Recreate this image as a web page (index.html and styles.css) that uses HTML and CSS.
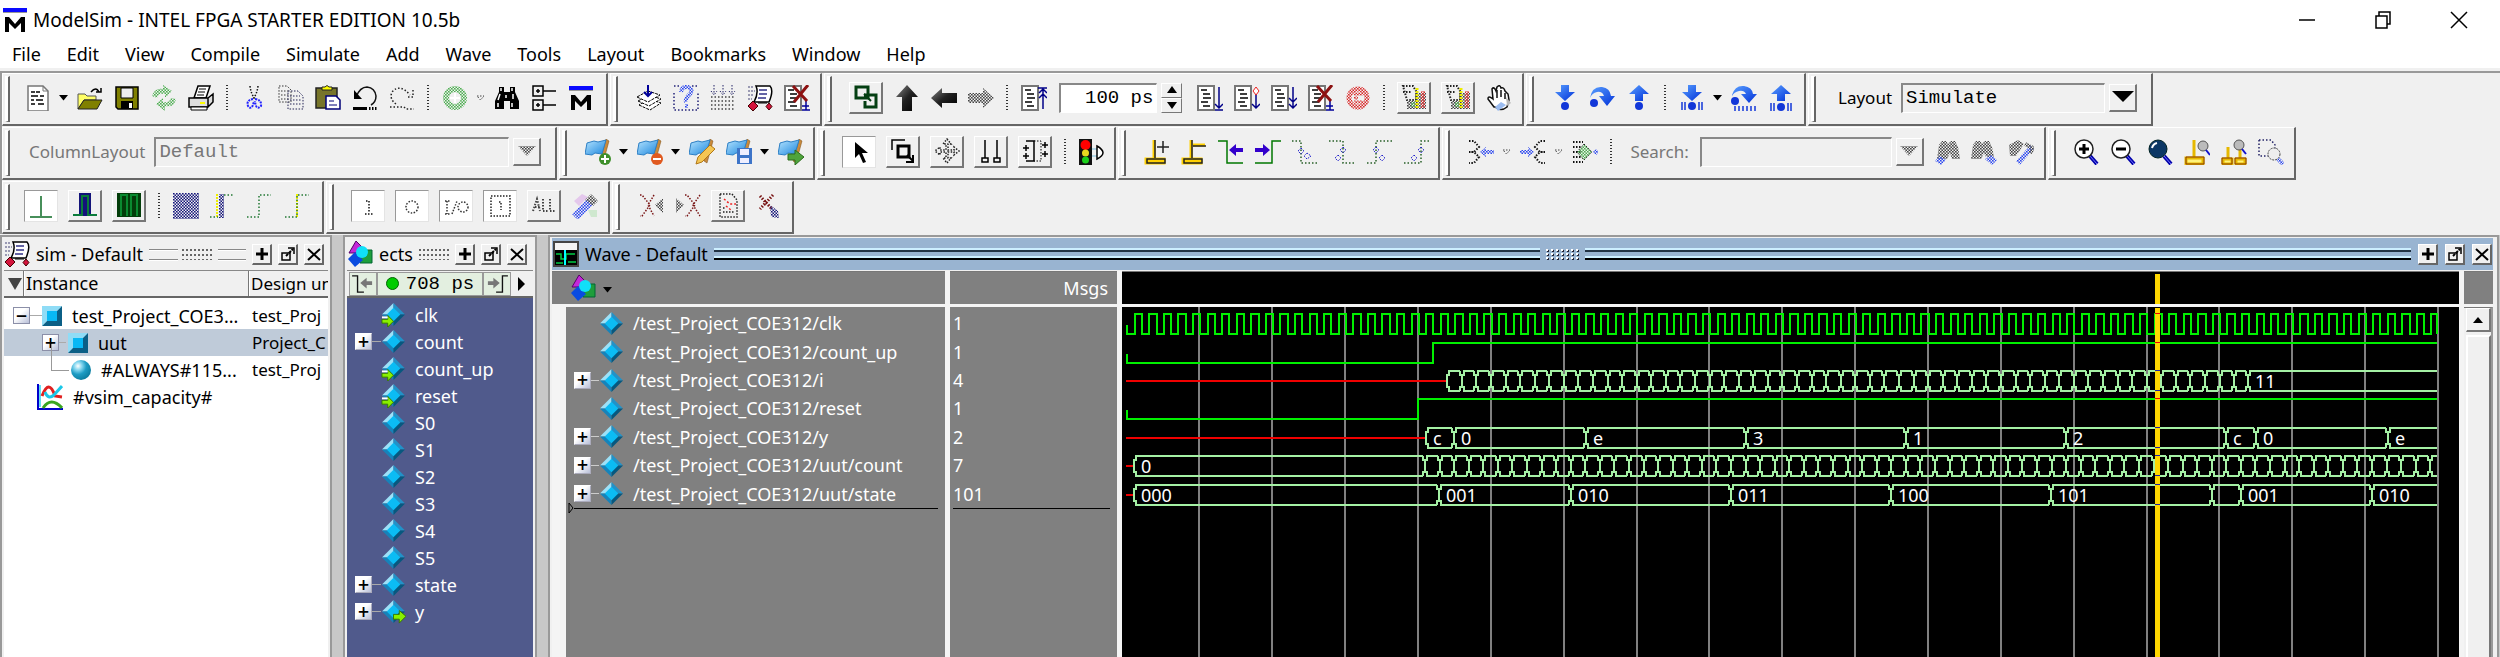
FILE: index.html
```html
<!DOCTYPE html>
<html lang="en">
<head>
<meta charset="utf-8">
<title>ModelSim - INTEL FPGA STARTER EDITION 10.5b</title>
<link rel="stylesheet" href="styles.css">
</head>
<body>
<svg class="sprite" aria-hidden="true">
<defs>
<pattern id="pk" width="3" height="3" patternUnits="userSpaceOnUse"><path d="M0 0h1.6v1.6H0zM1.5 1.5h1.5v1.5H1.5z" fill="#444"/></pattern>
<pattern id="pb" width="3" height="3" patternUnits="userSpaceOnUse"><path d="M0 0h1.6v1.6H0zM1.5 1.5h1.5v1.5H1.5z" fill="#2a45f0"/></pattern>
<pattern id="pn" width="3" height="3" patternUnits="userSpaceOnUse"><path d="M0 0h1.6v1.6H0zM1.5 1.5h1.5v1.5H1.5z" fill="#15157a"/></pattern>
<pattern id="pg" width="3" height="3" patternUnits="userSpaceOnUse"><path d="M0 0h1.6v1.6H0zM1.5 1.5h1.5v1.5H1.5z" fill="#4cae50"/></pattern>
<pattern id="pr" width="3" height="3" patternUnits="userSpaceOnUse"><path d="M0 0h1.6v1.6H0zM1.5 1.5h1.5v1.5H1.5z" fill="#d92a2a"/></pattern>
<linearGradient id="dark" x1="0" y1="0" x2="1" y2="1"><stop offset="0" stop-color="#888"/><stop offset=".5" stop-color="#222"/><stop offset="1" stop-color="#000"/></linearGradient>
<linearGradient id="blue" x1="0" y1="0" x2="1" y2="1"><stop offset="0" stop-color="#5aa0ff"/><stop offset="1" stop-color="#0030d8"/></linearGradient>
<linearGradient id="sky" x1="0" y1="0" x2="1" y2="1"><stop offset="0" stop-color="#b5e4ff"/><stop offset="1" stop-color="#1b86dd"/></linearGradient>
<radialGradient id="ball" cx=".35" cy=".3" r=".7"><stop offset="0" stop-color="#fff"/><stop offset=".3" stop-color="#7fd4ee"/><stop offset=".6" stop-color="#1d9cc4"/><stop offset="1" stop-color="#0d7fa2"/></radialGradient>
</defs>
<symbol id="caret" viewBox="0 0 9 6"><path d="M0 0h9L4.500 5.500z" fill="#000"/></symbol>
<symbol id="caret-off" viewBox="0 0 9 6"><path d="M1 1h7L4.500 5z" fill="none" stroke="#444" stroke-dasharray="1.500 1.500"/></symbol>
<symbol id="m" viewBox="0 0 26 26"><path d="M1 1h24v4H1z" fill="#0a0aff"/><path d="M1 5h24v1H1z" fill="#999"/><path d="M3 25V10h4l6 7 6-7h4v15h-4v-9l-6 6-6-6v9z" fill="#000"/></symbol>
<symbol id="new" viewBox="0 0 26 26"><path d="M3 1h15l5 5v20H3z" fill="#fff" stroke="#777" stroke-width="1.500"/><path d="M18 1v5h5" fill="none" stroke="#777"/><path d="M6 7h4m1 0h4M6 11h7m2 0h4M6 15h3m2 0h7M6 19h4m3 0h6" stroke="#000" stroke-width="1.500"/></symbol>
<symbol id="open" viewBox="0 0 26 26"><path d="M1 24V9h7l2 2h9v4H7z" fill="#ffff66" stroke="#555"/><path d="M1 24l6-9h18l-5 9z" fill="#808000" stroke="#222"/><path d="M14 7q5-6 8 0m-3 0h5V3" fill="none" stroke="#000" stroke-width="1.500"/></symbol>
<symbol id="save" viewBox="0 0 26 26"><path d="M2 2h22v22H4l-2-2z" fill="#808000" stroke="#000" stroke-width="1.500"/><path d="M7 3h12v10H7z" fill="#eee" stroke="#000"/><path d="M7 16h12v8H7z" fill="#000"/><path d="M15 18h3v5h-3z" fill="#fff"/></symbol>
<symbol id="refresh" viewBox="0 0 26 26"><path d="M1 11q3-9 11-7V0l9 6-7 7V9Q7 8 6 13zM25 14q-2 9-11 7v5l-9-7 7-6v4q7 1 8-4z" fill="url(#pg)"/></symbol>
<symbol id="print" viewBox="0 0 26 26"><path d="M6 13L10 1h12l-4 12z" fill="#fff" stroke="#000" stroke-width="1.500"/><path d="M11 4h7m-8 3h7m-8 3h7" stroke="#000"/><path d="M1 13h19v9H1zM20 13l5-4v8l-5 5z" fill="#ddd" stroke="#000" stroke-width="1.500"/><path d="M3 22h16v3H3z" fill="#fff" stroke="#000"/><path d="M12 17h5v2h-5z" fill="#ff0"/></symbol>
<symbol id="cut" viewBox="0 0 26 26"><path d="M9 1q1 8 5 13M17 1q-1 8-5 13" fill="none" stroke="#111" stroke-width="1.500" stroke-dasharray="1.500 1.500"/><path d="M12 14q-7 1-5 7 4 5 6-5M14 14q7 1 6 7-5 5-6-5" fill="none" stroke="#22f" stroke-width="2" stroke-dasharray="2 1"/></symbol>
<symbol id="copy" viewBox="0 0 26 26"><path d="M1 1h8l4 4v12H1zM3 6h8M3 10h8M3 14h8" fill="none" stroke="#333" stroke-dasharray="1.500 1.500"/><path d="M10 6h10l5 5v13H10zM12 11h10M12 15h12M12 19h12" fill="none" stroke="#225" stroke-dasharray="1.500 1.500"/></symbol>
<symbol id="paste" viewBox="0 0 26 26"><path d="M1 3h21v20H1z" fill="#77752a" stroke="#222" stroke-width="1.500"/><path d="M7 5V2h3q2-3 4 0h3v3z" fill="#ff0" stroke="#222"/><path d="M11 11h10l4 4v9H11z" fill="#fff" stroke="#007" stroke-width="1.500"/><path d="M14 16h5m-5 4h8" stroke="#007"/></symbol>
<symbol id="undo" viewBox="0 0 26 26"><path d="M4 12Q8 2 15 2q8 1 9 9 0 6-5 9" fill="none" stroke="#111" stroke-width="1.500"/><path d="M2 5v9h8z" fill="#000"/><path d="M1 22h14v3H1z" fill="#000"/><path d="M17 23.500h8" stroke="#000" stroke-width="3" stroke-dasharray="1.500 1.500"/></symbol>
<symbol id="redo" viewBox="0 0 26 26"><path d="M7 19Q0 14 3 7q8-9 18 3M24 5v7h-7M1 22h14l2 2h8" fill="none" stroke="#222" stroke-width="1.500" stroke-dasharray="1.500 2"/></symbol>
<symbol id="add" viewBox="0 0 26 26"><circle cx="13" cy="13" r="9" fill="none" stroke="url(#pg)" stroke-width="6"/><path d="M13 8v10M8 13h10" stroke="#fff" stroke-width="2"/></symbol>
<symbol id="find" viewBox="0 0 26 26"><path d="M5 2h5v5h6V2h5v5l4 9v8h-9v-8h-6v8H1v-8l4-9z" fill="#000"/><path d="M7 3v3M18 3v3M6 9l-2 6M12 10v3M19 9v5M4 18v4M18 18v4" stroke="#fff" stroke-width="1.500"/></symbol>
<symbol id="tree" viewBox="0 0 26 26"><path d="M2 1h10v10H2zM2 15h10v10H2zM12 6h13M12 20h13M7 4v4M5 6h4M7 18v4M5 20h4" fill="none" stroke="#000" stroke-width="1.500"/></symbol>
<symbol id="compile" viewBox="0 0 26 26"><path d="M3 20l11 5 11-7-12-4z" fill="#fff" stroke="#000" stroke-dasharray="3 1"/><path d="M2 16l11 5 12-7-12-4z" fill="#fff" stroke="#000" stroke-dasharray="3 1"/><path d="M1 12l11 5 12-7-12-4z" fill="#fff" stroke="#000" stroke-dasharray="3 1"/><path d="M12 0v10m-4-3l4 4 4-4" fill="none" stroke="#009" stroke-width="2"/></symbol>
<symbol id="compile2" viewBox="0 0 26 26"><path d="M1 8v17h24V8M1 1h6M19 1h6" fill="none" stroke="#227" stroke-width="1.500" stroke-dasharray="1.500 2"/><path d="M8 7q1-6 7-5 7 3 0 9-3 3-2 6M12 21h3" fill="none" stroke="url(#pb)" stroke-width="4"/></symbol>
<symbol id="compile3" viewBox="0 0 26 26"><path d="M1 12h24M1 16h24M1 20h24M1 24h24" stroke="#444" stroke-width="1.500" stroke-dasharray="1.500 2"/><path d="M4 0v9M13 0v9M22 0v9M1 6l3 4 3-4M10 6l3 4 3-4M19 6l3 4 3-4" fill="none" stroke="#226" stroke-dasharray="1.500 1.500"/></symbol>
<symbol id="sim" viewBox="0 0 26 26"><path d="M9 1h14q4 4-1 16H7q5-9 2-16z" fill="#fff" stroke="#000" stroke-width="1.500"/><path d="M12 5h8m-8 4h8m-9 4h8" stroke="#338" stroke-width="1.500"/><path d="M1 2h6M1 6h7M1 10h6M1 14h4" stroke="#447" stroke-dasharray="2 1"/><path d="M6 16l5 5-5 5-5-5zM22 18l3 3.500-3 3.500-3-3.500z" fill="#d4143c" stroke="#400"/><path d="M11 18h9" stroke="#000"/></symbol>
<symbol id="doc" viewBox="0 0 26 26"><path d="M1 1h16v24H1z" fill="#fff" stroke="#777" stroke-width="2"/><path d="M4 5h6M6 9h7M6 13h8M4 17h7M6 21h7" stroke="#000" stroke-width="1.500"/></symbol>
<symbol id="break" viewBox="0 0 26 26"><use href="#doc" width="26" height="26"/><path d="M22 15v10m-4-4h7m-7 4h8" stroke="#009" stroke-width="1.500"/><path d="M9 1l14 15M24 0L10 17" stroke="#8c1111" stroke-width="3"/></symbol>
<symbol id="step-doc" viewBox="0 0 26 26"><use href="#doc" width="26" height="26"/><path d="M22 2v21m-4-4l4 4 4-4m-8 6h8" fill="none" stroke="#008" stroke-width="1.500"/></symbol>
<symbol id="run-doc" viewBox="0 0 26 26"><use href="#doc" width="26" height="26"/><path d="M22 8v14m-4-3l4 4 4-4" fill="none" stroke="#008" stroke-width="1.500"/><path d="M22 2l3 4-3 4-3-4z" fill="#fff" stroke="#e22"/></symbol>
<symbol id="all-doc" viewBox="0 0 26 26"><use href="#doc" width="26" height="26"/><path d="M22 2v21m-4-10l4 4 4-4m-8 6l4 4 4-4" fill="none" stroke="#008" stroke-width="1.500"/></symbol>
<symbol id="restart" viewBox="0 0 26 26"><use href="#doc" width="26" height="26"/><path d="M22 24V3m-5 0h9m-8 5l4-4 4 4m-8 5l4-4 4 4" fill="none" stroke="#008" stroke-width="1.500"/></symbol>
<symbol id="links" viewBox="0 0 26 26"><path d="M3 3h12v11H3zM11 11h12v12H12v-6" fill="none" stroke="#043f12" stroke-width="3"/><path d="M11 10l7 7" stroke="#043f12" stroke-width="2"/></symbol>
<symbol id="up" viewBox="0 0 26 26"><path d="M13 0l11 12h-6v14H8V12H2z" fill="url(#dark)"/></symbol>
<symbol id="left" viewBox="0 0 26 26"><path d="M0 13L11 3v5h15v10H11v5z" fill="url(#dark)"/></symbol>
<symbol id="right" viewBox="0 0 26 26"><path d="M26 13L15 3v5H0v10h15v5z" fill="url(#pk)"/></symbol>
<symbol id="stop" viewBox="0 0 26 26"><circle cx="13" cy="13" r="9" fill="none" stroke="url(#pr)" stroke-width="5"/><path d="M9 9h9M9 13h4M9 17h9" stroke="url(#pr)" stroke-width="3"/></symbol>
<symbol id="prof" viewBox="0 0 26 26"><path d="M2 2h10l3 5v9H6zM2 8h8" fill="none" stroke="#222" stroke-width="2" stroke-dasharray="1.500 1.500"/><path d="M6 17h12v8H6zM14 9h11v16H14z" fill="url(#pk)"/><path d="M10 18h4v5h-4z" fill="url(#pg)"/><path d="M16 4v21" stroke="#ee0" stroke-width="3" stroke-dasharray="2 1"/><path d="M22 7v17" stroke="url(#pr)" stroke-width="4"/></symbol>
<symbol id="hand" viewBox="0 0 26 26"><path d="M8 22L2 14q0-4 5 0L6 4q2-3 4 2l1-4q3-3 4 1 3-1 4 3l3 3 1 6-2 7q-6 5-12 0z" fill="#fff" stroke="#111" stroke-width="1.500"/><path d="M11 5v8M15 5v7M19 8v6" stroke="#111" stroke-width="1.500"/><path d="M20 12l5 6-4 3z" fill="#bbb"/><path d="M9 22l6-5 5 3-8 6z" fill="#9bbcf0"/></symbol>
<symbol id="into" viewBox="0 0 26 26"><path d="M9 0h8v7h6l-10 9L3 7h6z" fill="url(#blue)"/><circle cx="13" cy="21" r="4" fill="#1237d8"/></symbol>
<symbol id="over" viewBox="0 0 26 26"><path d="M1 13Q3 1 13 2q8 1 9 9h4l-8 10-8-10h5q-2-5-7-4-5 1-7 6z" fill="url(#blue)"/><circle cx="5" cy="18" r="4" fill="#1237d8"/></symbol>
<symbol id="out" viewBox="0 0 26 26"><path d="M13 0l10 9h-6v7H9V9H3z" fill="url(#blue)"/><circle cx="13" cy="21" r="4" fill="#1237d8"/></symbol>
<symbol id="into2" viewBox="0 0 26 26"><path d="M9 0h8v7h6l-10 9L3 7h6z" fill="url(#blue)"/><circle cx="13" cy="21" r="4" fill="#1237d8"/><path d="M3 17v8M6 17v8M20 17v8M23 17v8" stroke="#1237d8" stroke-width="1.500"/></symbol>
<symbol id="over2" viewBox="0 0 26 26"><path d="M1 10Q4 0 13 1q8 1 9 8h4l-8 9-8-9h5q-2-4-7-3-5 1-7 5z" fill="url(#blue)"/><circle cx="4" cy="16" r="4" fill="#1237d8"/><path d="M4 21v5M8 21v5M12 21v5M16 21v5M20 21v5M24 21v5" stroke="#1237d8" stroke-width="1.500"/></symbol>
<symbol id="out2" viewBox="0 0 26 26"><path d="M13 0l10 9h-6v7H9V9H3z" fill="url(#blue)"/><circle cx="13" cy="22" r="4" fill="#1237d8"/><path d="M3 18v8M6 18v8M20 18v8M23 18v8" stroke="#1237d8" stroke-width="1.500"/></symbol>
<symbol id="flag" viewBox="0 0 26 26"><path d="M21 0l3 2-6 22-3-2z" fill="#c98a3c" stroke="#7a4c12" stroke-width=".5"/><path d="M2 4l7-2 4 1 8-2-4 14-7-1-3 2-7-1z" fill="url(#sky)" stroke="#2d7fc4"/></symbol>
<symbol id="flag-add" viewBox="0 0 26 26"><use href="#flag" width="26" height="26"/><circle cx="20" cy="20" r="6" fill="#3f8f2b"/><path d="M20 16v8M16 20h8" stroke="#fff" stroke-width="2"/></symbol>
<symbol id="flag-del" viewBox="0 0 26 26"><use href="#flag" width="26" height="26"/><circle cx="20" cy="20" r="6" fill="#e05a20"/><path d="M16 20h8" stroke="#fff" stroke-width="2"/></symbol>
<symbol id="flag-edit" viewBox="0 0 26 26"><use href="#flag" width="26" height="26"/><path d="M7 25l2-7L21 6l5 4-13 13z" fill="#f4c654" stroke="#b17716"/></symbol>
<symbol id="flag-save" viewBox="0 0 26 26"><use href="#flag" width="26" height="26"/><path d="M11 9h15v16H11z" fill="#3d74c8"/><path d="M14 10h9v6h-9zM14 19h9v5h-9z" fill="#eef"/></symbol>
<symbol id="flag-go" viewBox="0 0 26 26"><use href="#flag" width="26" height="26"/><path d="M10 15h7v-4l9 7-9 8v-5h-7z" fill="#4fa43c" stroke="#2c6c1c"/></symbol>
<symbol id="pointer" viewBox="0 0 26 26"><path d="M9 3v16l4-4 4 9 3-1-4-9h6z" fill="#000"/></symbol>
<symbol id="zoom-box" viewBox="0 0 26 26"><path d="M2 12V2h13" fill="none" stroke="#000" stroke-width="1.500"/><path d="M8 8h11v11H8z" fill="none" stroke="#000" stroke-width="3"/><path d="M17 17l6 6m0-6v7h-7" fill="none" stroke="#000" stroke-width="2"/></symbol>
<symbol id="pan" viewBox="0 0 26 26"><path d="M13 1l4 5h-3v6h6V9l5 4-5 4v-3h-6v6h3l-4 5-4-5h3v-6H6v3l-5-4 5-4v3h6V6H9z" fill="none" stroke="#222" stroke-width="1.500" stroke-dasharray="1.500 1.500"/></symbol>
<symbol id="two" viewBox="0 0 26 26"><path d="M7 2v18M19 2v18M4 20h6v4H4zM16 20h6v4h-6z" fill="none" stroke="#000" stroke-width="1.500"/></symbol>
<symbol id="edit-wave" viewBox="0 0 26 26"><path d="M4 3h8v20H4" fill="none" stroke="#000" stroke-width="1.500"/><path d="M12 3h7v20h-7" fill="none" stroke="#000" stroke-dasharray="1.500 1.500"/><path d="M1 10h6M4 7v6M1 18h6M4 15v6M20 7h6M23 4v6M20 16h6M23 13v6" stroke="#000" stroke-width="1.500"/></symbol>
<symbol id="traffic" viewBox="0 0 26 26"><path d="M0 0h13v26H0z" fill="#111"/><circle cx="6.500" cy="6" r="5" fill="#f00"/><circle cx="6.500" cy="14" r="3.500" fill="#e8d820"/><circle cx="6.500" cy="21" r="3.500" fill="#1bd01b"/><path d="M13 10h5M13 17h5" stroke="#7bd"/><path d="M18 7v13q12-6 0-13z" fill="#fff" stroke="#000" stroke-width="1.500"/></symbol>
<symbol id="cur-add" viewBox="0 0 26 26"><path d="M10 1v18M2 20h18v4H2z" stroke="#ffd000" fill="#ffd000" stroke-width="3"/><path d="M11 1v18M3 20h18v4H3zM13 8h12M19 2v12" fill="none" stroke="#222" stroke-width="1.500"/></symbol>
<symbol id="cur-del" viewBox="0 0 26 26"><path d="M10 1v18M2 20h18v4H2zM12 6h12" stroke="#ffd000" fill="#ffd000" stroke-width="3"/><path d="M11 1v18M3 20h18v4H3zM12 7h13" fill="none" stroke="#222" stroke-width="1.500"/></symbol>
<symbol id="edge-l" viewBox="0 0 26 26"><path d="M0 2h9v22h16" fill="none" stroke="#070" stroke-width="1.500"/><path d="M11 11l7-6v4h7v4h-7v4z" fill="#30c"/></symbol>
<symbol id="edge-r" viewBox="0 0 26 26"><path d="M26 2h-9v22H0" fill="none" stroke="#070" stroke-width="1.500"/><path d="M15 11L8 5v4H0v4h8v4z" fill="#30c"/></symbol>
<symbol id="e1" viewBox="0 0 26 26"><path d="M0 2h9v22h17" fill="none" stroke="#275f27" stroke-width="1.500" stroke-dasharray="1.500 2"/><path d="M9 9l3 3-3 3-3-3zM15 14l4 3-4 3-3-3z" fill="none" stroke="#22c" stroke-dasharray="1.500 1"/></symbol>
<symbol id="e2" viewBox="0 0 26 26"><path d="M0 2h14v22h12" fill="none" stroke="#275f27" stroke-width="1.500" stroke-dasharray="1.500 2"/><path d="M14 8l3 3-3 3-3-3zM9 16l3 3-3 3-3-3z" fill="none" stroke="#22c" stroke-dasharray="1.500 1"/></symbol>
<symbol id="e3" viewBox="0 0 26 26"><path d="M26 2H10v22H0" fill="none" stroke="#275f27" stroke-width="1.500" stroke-dasharray="1.500 2"/><path d="M10 8l3 3-3 3-3-3zM16 16l3 3-3 3-3-3z" fill="none" stroke="#22c" stroke-dasharray="1.500 1"/></symbol>
<symbol id="e4" viewBox="0 0 26 26"><path d="M26 2h-8v22H0" fill="none" stroke="#275f27" stroke-width="1.500" stroke-dasharray="1.500 2"/><path d="M18 8l3 3-3 3-3-3zM11 16l3 3-3 3-3-3z" fill="none" stroke="#22c" stroke-dasharray="1.500 1"/></symbol>
<symbol id="exp1" viewBox="0 0 26 26"><path d="M1 2h5l5 6-5 5H1M1 13h5l5 5-5 6H1" fill="none" stroke="#111" stroke-width="2" stroke-dasharray="1.500 1.500"/><path d="M12 13l6-5v3h8v4h-8v3z" fill="url(#pb)"/></symbol>
<symbol id="exp2" viewBox="0 0 26 26"><path d="M25 2h-5l-5 6 5 5h5M25 13h-5l-5 5 5 6h5" fill="none" stroke="#111" stroke-width="2" stroke-dasharray="1.500 1.500"/><path d="M14 13L8 8v3H0v4h8v3z" fill="url(#pb)"/></symbol>
<symbol id="exp3" viewBox="0 0 26 26"><path d="M1 3h10M1 13h8M1 23h10M1 8h8M1 18h8" stroke="#111" stroke-width="2" stroke-dasharray="1.500 1.500"/><path d="M12 5l8 8-8 8-7-8z" fill="url(#pg)" stroke="#222" stroke-dasharray="1.500 1.500"/><path d="M24 10l3 3-3 3-3-3z" fill="url(#pb)"/></symbol>
<symbol id="find-off" viewBox="0 0 26 26"><path d="M5 6l3-4h4l2 3 3-3h4l3 6 2 12h-8l-2-6-3 6H3z" fill="url(#pk)"/><path d="M1 22l5-5 6 4-5 5z" fill="url(#pb)"/></symbol>
<symbol id="find-off2" viewBox="0 0 26 26"><path d="M2 6l3-4h4l2 3 3-3h4l3 6 2 10h-8l-2-4-3 6H0z" fill="url(#pk)"/><path d="M14 20l6-4 6 5-5 5z" fill="url(#pb)"/></symbol>
<symbol id="wand" viewBox="0 0 26 26"><path d="M1 6l9-5 6 4-8 12H2z" fill="url(#pk)"/><path d="M10 24L24 8" stroke="url(#pb)" stroke-width="5"/><path d="M17 5l8 4-3 5" fill="none" stroke="url(#pk)" stroke-width="4"/></symbol>
<symbol id="brush" viewBox="0 0 26 26"><path d="M2 8l8-7 6 3-9 9z" fill="#e4c8ec"/><path d="M3 24L18 9" stroke="url(#pb)" stroke-width="8"/><path d="M13 7l6-6 7 7-5 5z" fill="url(#pk)"/><path d="M16 17h9v7h-6z" fill="#cfe8cf"/></symbol>
<symbol id="lens" viewBox="0 0 26 26"><path d="M17 17l7 8" stroke="#00a" stroke-width="4"/><path d="M17 17l7 8" stroke="#77f"/></symbol>
<symbol id="zin" viewBox="0 0 26 26"><use href="#lens" width="26" height="26"/><circle cx="11" cy="10" r="9" fill="#fff" stroke="#222" stroke-width="1.500"/><path d="M11 5v10M6 10h10" stroke="#000" stroke-width="3"/></symbol>
<symbol id="zout" viewBox="0 0 26 26"><use href="#lens" width="26" height="26"/><circle cx="11" cy="10" r="9" fill="#fff" stroke="#222" stroke-width="1.500"/><path d="M6 10h10" stroke="#000" stroke-width="3"/></symbol>
<symbol id="zfull" viewBox="0 0 26 26"><use href="#lens" width="26" height="26"/><circle cx="11" cy="10" r="9" fill="#0b3765" stroke="#022"/><path d="M5 9q1-4 5-5" stroke="#fff" stroke-width="2" fill="none"/></symbol>
<symbol id="zcur" viewBox="0 0 26 26"><path d="M10 1v18M2 19h17v6H2z" fill="#fff27a" stroke="#e6b800" stroke-width="3"/><path d="M2 18h18v7H2z" fill="none" stroke="#8a3a00"/><circle cx="19" cy="7" r="5" fill="#bbb" stroke="#555"/><path d="M22 11l4 5" stroke="#11c" stroke-width="2"/></symbol>
<symbol id="zcur2" viewBox="0 0 26 26"><path d="M7 8v11M19 8v11M2 20h9v5H2zM15 20h9v5h-9z" fill="#fff27a" stroke="#e6b800" stroke-width="3"/><path d="M1 19h10v6H1zM14 19h11v6H14z" fill="none" stroke="#8a3a00"/><circle cx="18" cy="6" r="5" fill="#bbb" stroke="#555"/><path d="M21 10l4 5" stroke="#11c" stroke-width="2"/></symbol>
<symbol id="zlast" viewBox="0 0 26 26"><path d="M1 1h12l4 5v5M1 1v16h9" fill="none" stroke="#226" stroke-width="1.500" stroke-dasharray="1.500 2"/><circle cx="16" cy="15" r="6" fill="#eee" stroke="#444" stroke-dasharray="2 1"/><path d="M20 20l5 5" stroke="url(#pb)" stroke-width="4"/></symbol>
<symbol id="w1" viewBox="0 0 26 26"><path d="M13 3v20M2 24h22" stroke="#0b6b25" stroke-width="1.500"/></symbol>
<symbol id="w2" viewBox="0 0 26 26"><path d="M7 1h12v23H7z" fill="#13137a"/><path d="M1 23h9V4h6v19h9" fill="none" stroke="#0b7b3a" stroke-width="2"/></symbol>
<symbol id="w3" viewBox="0 0 26 26"><path d="M1 1h24v24H1z" fill="#033d0a"/><path d="M5 24V3h6v21M15 24V3h6v21" fill="none" stroke="#0a8a30" stroke-width="2"/></symbol>
<symbol id="w4" viewBox="0 0 26 26"><path d="M0 0h26v26H0z" fill="url(#pn)"/></symbol>
<symbol id="w5" viewBox="0 0 26 26"><path d="M9 1h5v24H9z" fill="url(#pn)"/><path d="M7 1v24" stroke="#ee0" stroke-width="2" stroke-dasharray="2 1"/><path d="M0 24h8M14 2h10" stroke="#273" stroke-width="1.500" stroke-dasharray="1.500 2"/></symbol>
<symbol id="w6" viewBox="0 0 26 26"><path d="M0 24h12V2h12" fill="none" stroke="#273" stroke-width="1.500" stroke-dasharray="1.500 2"/></symbol>
<symbol id="w7" viewBox="0 0 26 26"><path d="M13 1v24" stroke="#ee0" stroke-width="2" stroke-dasharray="2 1"/><path d="M1 24h12V2h12" fill="none" stroke="#273" stroke-width="1.500" stroke-dasharray="1.500 2"/></symbol>
<symbol id="f1" viewBox="0 0 26 26"><path d="M11 8h3v12M10 21h8" fill="none" stroke="#111" stroke-width="1.500" stroke-dasharray="1.500 1.500"/></symbol>
<symbol id="f2" viewBox="0 0 26 26"><circle cx="13" cy="14" r="6" fill="none" stroke="#333" stroke-width="1.500" stroke-dasharray="1.500 1.500"/></symbol>
<symbol id="f3" viewBox="0 0 26 26"><path d="M2 8h5M4 8v13M2 21h5M9 21l5-13" fill="none" stroke="#333" stroke-width="1.500" stroke-dasharray="1.500 1.500"/><circle cx="20" cy="14" r="5" fill="none" stroke="#333" stroke-width="1.500" stroke-dasharray="1.500 1.500"/></symbol>
<symbol id="f4" viewBox="0 0 26 26"><path d="M4 3h19v20H4zM12 9h2v8" fill="none" stroke="#222" stroke-width="1.500" stroke-dasharray="1.500 1.500"/></symbol>
<symbol id="f5" viewBox="0 0 26 26"><path d="M2 19l4-12 3 12M4 15h5M12 7v12h5M19 7v12h5" fill="none" stroke="#444" stroke-width="2" stroke-dasharray="1.500 1.500"/></symbol>
<symbol id="x1" viewBox="0 0 26 26"><path d="M2 2h2l8 10-8 11H2M16 2l-6 10 6 11" fill="none" stroke="#711" stroke-width="1.500" stroke-dasharray="1.500 1.500"/><path d="M17 12l8-7v15z" fill="url(#pk)"/></symbol>
<symbol id="x2" viewBox="0 0 26 26"><path d="M10 2h2l8 10-8 11h-2M25 2l-7 10 7 11" fill="none" stroke="#711" stroke-width="1.500" stroke-dasharray="1.500 1.500"/><path d="M9 12L1 5v15z" fill="url(#pk)"/></symbol>
<symbol id="x3" viewBox="0 0 26 26"><path d="M5 2h12l5 6v17H5zM8 20h11M8 16h3" fill="none" stroke="#222" stroke-width="1.500" stroke-dasharray="1.500 1.500"/><path d="M9 7l6 5 6 0M11 14l5 4" fill="none" stroke="#e22" stroke-width="1.500" stroke-dasharray="2 2"/></symbol>
<symbol id="x4" viewBox="0 0 26 26"><path d="M4 3l12 13M17 2L4 16" stroke="#711" stroke-width="3" stroke-dasharray="1.500 1.500"/><path d="M14 12l8 6 1 7-8-1z" fill="url(#pn)"/></symbol>
<symbol id="shapes" viewBox="0 0 26 26"><path d="M9 0l8 8-4 4H2z" fill="#c428d8" stroke="#506"/><path d="M15 9h10v13H13z" fill="#1e9e3c" stroke="#063"/><path d="M8 11l8 8-8 7-7-8z" fill="#0a4be0"/><circle cx="15" cy="11" r="6" fill="#10e0f8"/></symbol>
<symbol id="wave-ico" viewBox="0 0 26 26"><path d="M1 1h24v24H1z" fill="#f4f4f4" stroke="#444" stroke-width="2"/><path d="M2 9h22v15H2z" fill="#000"/><path d="M3 13h5v5h5v-5h9M3 22h7m5-1h8" fill="none" stroke="#0c4" stroke-width="1.500"/><path d="M12 9v15" stroke="#0ff" stroke-width="2"/></symbol>
<symbol id="gem" viewBox="0 0 26 26"><path d="M13 1L1 13h12z" fill="#9ce1f8"/><path d="M13 1l12 12H13z" fill="#2292c8"/><path d="M1 13l12 12V13z" fill="#1683ba"/><path d="M25 13L13 25V13z" fill="#07587f"/><path d="M13 6l7 7-7 7-7-7z" fill="#0bbcf4"/></symbol>
<symbol id="gem-in" viewBox="0 0 26 26"><use href="#gem" width="26" height="26"/><path d="M1 18h6v-4l6 6-6 6v-4H1z" fill="#88f000" stroke="#367800"/><path d="M1 16h6" stroke="#fff" stroke-width="2"/></symbol>
<symbol id="gem-out" viewBox="0 0 26 26"><use href="#gem" width="26" height="26"/><path d="M13 16h6v-4l7 6-7 7v-4h-6z" fill="#88f000" stroke="#367800"/></symbol>
<symbol id="cube" viewBox="0 0 20 20"><path d="M0 0h20l-5 5H5v10l-5 5z" fill="#8fdcf6"/><path d="M20 0v20H0l5-5h10V5z" fill="#0b5f86"/><path d="M5 5h10v10H5z" fill="#08b8f4"/></symbol>
<symbol id="orb" viewBox="0 0 22 22"><circle cx="11" cy="11" r="11" fill="url(#ball)"/></symbol>
<symbol id="chart" viewBox="0 0 26 26"><path d="M1 0v25h25" fill="none" stroke="#00c" stroke-width="2"/><path d="M3 1v22" stroke="#6de" stroke-width="2"/><path d="M5 12q7-18 13 0l7 1" fill="none" stroke="#e02020" stroke-width="3"/><path d="M6 24q8-12 19 0" fill="none" stroke="#3aa520" stroke-width="3"/><path d="M8 8q3 8 9 3l8-9" fill="none" stroke="#1ac8e8" stroke-width="3"/></symbol>
<symbol id="plus" viewBox="0 0 18 18"><path d="M9 3v12M3 9h12" stroke="#000" stroke-width="3"/></symbol>
<symbol id="undock" viewBox="0 0 18 18"><path d="M3 8h8v7H3zM9 3h6v6" fill="none" stroke="#000" stroke-width="1.500"/><path d="M7 11l7-7" stroke="#000" stroke-width="2" stroke-dasharray="3 1"/></symbol>
<symbol id="close" viewBox="0 0 18 18"><path d="M3 4l12 11M15 4L3 15" stroke="#000" stroke-width="2"/></symbol>
<symbol id="go-prev" viewBox="0 0 26 22"><path d="M1 2h6v18h7" fill="none" stroke="#111" stroke-width="1.500"/><path d="M10 10l7-6v4h6v4h-6v4z" fill="#777"/></symbol>
<symbol id="go-next" viewBox="0 0 26 22"><path d="M25 2h-6v18h-7" fill="none" stroke="#111" stroke-width="1.500"/><path d="M16 10L9 4v4H3v4h6v4z" fill="#777"/></symbol>
</svg>

<header class="titlebar">
  <svg class="ico"><use href="#m"/></svg>
  <h1>ModelSim - INTEL FPGA STARTER EDITION 10.5b</h1>
  <div class="window-buttons">
    <button aria-label="Minimize"><svg viewBox="0 0 18 18"><path d="M1 9h16"/></svg></button>
    <button aria-label="Restore"><svg viewBox="0 0 18 18"><path d="M2 5h11v12H2zM5 5V1h11v12h-3"/></svg></button>
    <button aria-label="Close"><svg viewBox="0 0 18 18"><path d="M1 1l16 16M17 1L1 17"/></svg></button>
  </div>
</header>
<nav class="menubar">
  <button>File</button><button>Edit</button><button>View</button><button>Compile</button><button>Simulate</button><button>Add</button><button>Wave</button><button>Tools</button><button>Layout</button><button>Bookmarks</button><button>Window</button><button>Help</button>
</nav>

<section class="toolbars">
  <div class="row">
    <div class="bar">
      <button class="t" aria-label="New"><svg><use href="#new"/></svg></button><button class="drop" aria-label="New menu"><svg><use href="#caret"/></svg></button>
      <button class="t" aria-label="Open"><svg><use href="#open"/></svg></button>
      <button class="t" aria-label="Save"><svg><use href="#save"/></svg></button>
      <button class="t" aria-label="Reload"><svg><use href="#refresh"/></svg></button>
      <button class="t" aria-label="Print"><svg><use href="#print"/></svg></button>
      <i class="sep"></i>
      <button class="t" aria-label="Cut"><svg><use href="#cut"/></svg></button>
      <button class="t" aria-label="Copy"><svg><use href="#copy"/></svg></button>
      <button class="t" aria-label="Paste"><svg><use href="#paste"/></svg></button>
      <button class="t" aria-label="Undo"><svg><use href="#undo"/></svg></button>
      <button class="t" aria-label="Redo"><svg><use href="#redo"/></svg></button>
      <i class="sep"></i>
      <button class="t" aria-label="Add"><svg><use href="#add"/></svg></button><button class="drop" aria-label="Add menu"><svg><use href="#caret-off"/></svg></button>
      <button class="t" aria-label="Find"><svg><use href="#find"/></svg></button>
      <button class="t" aria-label="Collapse all"><svg><use href="#tree"/></svg></button>
      <button class="t" aria-label="ModelSim"><svg><use href="#m"/></svg></button>
    </div>
    <div class="bar">
      <button class="t" aria-label="Compile"><svg><use href="#compile"/></svg></button>
      <button class="t" aria-label="Compile out of date"><svg><use href="#compile2"/></svg></button>
      <button class="t" aria-label="Compile all"><svg><use href="#compile3"/></svg></button>
      <button class="t" aria-label="Simulate"><svg><use href="#sim"/></svg></button>
      <button class="t" aria-label="Break"><svg><use href="#break"/></svg></button>
    </div>
    <div class="bar">
      <button class="b" aria-label="Environment"><svg><use href="#links"/></svg></button>
      <button class="t" aria-label="Up"><svg><use href="#up"/></svg></button>
      <button class="t" aria-label="Back"><svg><use href="#left"/></svg></button>
      <button class="t" aria-label="Forward"><svg><use href="#right"/></svg></button>
      <i class="sep"></i>
      <button class="t" aria-label="Restart"><svg><use href="#restart"/></svg></button>
      <input class="runlen" aria-label="Run length" value="100 ps">
      <div class="spin"><button aria-label="Increase"><svg viewBox="0 0 10 8"><path d="M5 0l5 7H0z"/></svg></button><button aria-label="Decrease"><svg viewBox="0 0 10 8"><path d="M5 8l5-7H0z"/></svg></button></div>
      <button class="t" aria-label="Run"><svg><use href="#step-doc"/></svg></button>
      <button class="t" aria-label="Continue run"><svg><use href="#run-doc"/></svg></button>
      <button class="t" aria-label="Run all"><svg><use href="#all-doc"/></svg></button>
      <button class="t" aria-label="Break run"><svg><use href="#break"/></svg></button>
      <button class="t" aria-label="Stop"><svg><use href="#stop"/></svg></button>
      <i class="sep"></i>
      <button class="b" aria-label="Performance profiling"><svg><use href="#prof"/></svg></button>
      <button class="b" aria-label="Memory profiling"><svg><use href="#prof"/></svg></button>
      <button class="t" aria-label="Edit breakpoints"><svg><use href="#hand"/></svg></button>
    </div>
    <div class="bar">
      <button class="t" aria-label="Step into"><svg><use href="#into"/></svg></button>
      <button class="t" aria-label="Step over"><svg><use href="#over"/></svg></button>
      <button class="t" aria-label="Step out"><svg><use href="#out"/></svg></button>
      <i class="sep"></i>
      <button class="t" aria-label="Step into instance"><svg><use href="#into2"/></svg></button><button class="drop" aria-label="Step menu"><svg><use href="#caret"/></svg></button>
      <button class="t" aria-label="Step over instance"><svg><use href="#over2"/></svg></button>
      <button class="t" aria-label="Step out instance"><svg><use href="#out2"/></svg></button>
    </div>
    <div class="bar combo-bar">
      <label for="layout">Layout</label>
      <select id="layout" class="combo layout"><option>Simulate</option></select>
      <button class="arrow" aria-label="Open layout list"><svg viewBox="0 0 22 12"><path d="M0 0h22L11 11z"/></svg></button>
    </div>
  </div>

  <div class="row">
    <div class="bar combo-bar off">
      <label for="columns">ColumnLayout</label>
      <select id="columns" class="combo columns" disabled><option>Default</option></select>
      <button class="arrow" disabled aria-label="Open column layout list"><svg viewBox="0 0 22 12"><path d="M2 1h18l-9 10z" fill="url(#pk)"/></svg></button>
    </div>
    <div class="bar">
      <button class="t" aria-label="Add bookmark"><svg><use href="#flag-add"/></svg></button><button class="drop" aria-label="Add bookmark menu"><svg><use href="#caret"/></svg></button>
      <button class="t" aria-label="Delete bookmark"><svg><use href="#flag-del"/></svg></button><button class="drop" aria-label="Delete bookmark menu"><svg><use href="#caret"/></svg></button>
      <button class="t" aria-label="Edit bookmarks"><svg><use href="#flag-edit"/></svg></button>
      <button class="t" aria-label="Save bookmarks"><svg><use href="#flag-save"/></svg></button><button class="drop" aria-label="Save bookmarks menu"><svg><use href="#caret"/></svg></button>
      <button class="t" aria-label="Go to bookmark"><svg><use href="#flag-go"/></svg></button>
    </div>
    <div class="bar">
      <button class="b on" aria-label="Select mode"><svg><use href="#pointer"/></svg></button>
      <button class="b" aria-label="Zoom mode"><svg><use href="#zoom-box"/></svg></button>
      <button class="b" aria-label="Pan mode"><svg><use href="#pan"/></svg></button>
      <button class="b" aria-label="Two cursor mode"><svg><use href="#two"/></svg></button>
      <button class="b" aria-label="Edit mode"><svg><use href="#edit-wave"/></svg></button>
      <i class="sep"></i>
      <button class="t" aria-label="Stop drawing"><svg><use href="#traffic"/></svg></button>
    </div>
    <div class="bar">
      <button class="t" aria-label="Insert cursor"><svg><use href="#cur-add"/></svg></button>
      <button class="t" aria-label="Delete cursor"><svg><use href="#cur-del"/></svg></button>
      <button class="t" aria-label="Previous transition"><svg><use href="#edge-l"/></svg></button>
      <button class="t" aria-label="Next transition"><svg><use href="#edge-r"/></svg></button>
      <button class="t" aria-label="Previous falling edge"><svg><use href="#e1"/></svg></button>
      <button class="t" aria-label="Next falling edge"><svg><use href="#e2"/></svg></button>
      <button class="t" aria-label="Previous rising edge"><svg><use href="#e3"/></svg></button>
      <button class="t" aria-label="Next rising edge"><svg><use href="#e4"/></svg></button>
    </div>
    <div class="bar search-bar off">
      <button class="t" aria-label="Expand"><svg><use href="#exp1"/></svg></button><button class="drop" aria-label="Expand menu"><svg><use href="#caret-off"/></svg></button>
      <button class="t" aria-label="Collapse"><svg><use href="#exp2"/></svg></button><button class="drop" aria-label="Collapse menu"><svg><use href="#caret-off"/></svg></button>
      <button class="t" aria-label="Expanded time"><svg><use href="#exp3"/></svg></button>
      <i class="sep"></i>
      <label for="search">Search:</label>
      <input id="search" class="combo search" disabled>
      <button class="arrow" disabled aria-label="Search history"><svg viewBox="0 0 22 12"><path d="M2 1h18l-9 10z" fill="url(#pk)"/></svg></button>
      <button class="t" aria-label="Find previous"><svg><use href="#find-off"/></svg></button>
      <button class="t" aria-label="Find next"><svg><use href="#find-off2"/></svg></button>
      <button class="t" aria-label="Search options"><svg><use href="#wand"/></svg></button>
    </div>
    <div class="bar">
      <button class="t" aria-label="Zoom in"><svg><use href="#zin"/></svg></button>
      <button class="t" aria-label="Zoom out"><svg><use href="#zout"/></svg></button>
      <button class="t" aria-label="Zoom full"><svg><use href="#zfull"/></svg></button>
      <button class="t" aria-label="Zoom on cursor"><svg><use href="#zcur"/></svg></button>
      <button class="t" aria-label="Zoom between cursors"><svg><use href="#zcur2"/></svg></button>
      <button class="t" aria-label="Zoom other window"><svg><use href="#zlast"/></svg></button>
    </div>
  </div>

  <div class="row">
    <div class="bar">
      <button class="b on" aria-label="Literal view"><svg><use href="#w1"/></svg></button>
      <button class="b" aria-label="Event view"><svg><use href="#w2"/></svg></button>
      <button class="b" aria-label="Delta view"><svg><use href="#w3"/></svg></button>
      <i class="sep"></i>
      <button class="t" aria-label="Expand all time"><svg><use href="#w4"/></svg></button>
      <button class="t" aria-label="Expand at cursor"><svg><use href="#w5"/></svg></button>
      <button class="t" aria-label="Collapse all time"><svg><use href="#w6"/></svg></button>
      <button class="t" aria-label="Collapse at cursor"><svg><use href="#w7"/></svg></button>
    </div>
    <div class="bar">
      <button class="b on" aria-label="Filter in"><svg><use href="#f1"/></svg></button>
      <button class="b on" aria-label="Filter out"><svg><use href="#f2"/></svg></button>
      <button class="b on" aria-label="Filter inout"><svg><use href="#f3"/></svg></button>
      <button class="b on" aria-label="Filter internal"><svg><use href="#f4"/></svg></button>
      <button class="b" aria-label="Filter all"><svg><use href="#f5"/></svg></button>
      <button class="t" aria-label="Change filter"><svg><use href="#brush"/></svg></button>
    </div>
    <div class="bar">
      <button class="t" aria-label="Previous X"><svg><use href="#x1"/></svg></button>
      <button class="t" aria-label="Next X"><svg><use href="#x2"/></svg></button>
      <button class="b" aria-label="Show X"><svg><use href="#x3"/></svg></button>
      <button class="t" aria-label="Trace X"><svg><use href="#x4"/></svg></button>
    </div>
  </div>
</section>

<main class="workspace">
  <section class="pane sim">
    <header class="pane-title">
      <svg class="ico"><use href="#sim"/></svg><h2>sim - Default</h2><i class="rails"></i><i class="dots"></i><i class="rails"></i>
      <button aria-label="Zoom pane"><svg><use href="#plus"/></svg></button><button aria-label="Undock"><svg><use href="#undock"/></svg></button><button aria-label="Close pane"><svg><use href="#close"/></svg></button>
    </header>
    <div class="sim-head"><span class="sort"><svg viewBox="0 0 14 12"><path d="M0 0h14L7 12z" fill="#444"/></svg></span><span>Instance</span><span>Design un</span></div>
    <ul class="tree">
      <li><span class="node"><button class="exp" aria-label="Collapse">−</button><i class="link"></i><svg class="cube"><use href="#cube"/></svg><b>test_Project_COE3...</b></span><span>test_Proj</span></li>
      <li class="sel"><span class="node in"><button class="exp" aria-label="Expand">+</button><i class="link"></i><svg class="cube"><use href="#cube"/></svg><b>uut</b></span><span>Project_C</span></li>
      <li><span class="node in"><i class="elbow"></i><svg class="cube"><use href="#orb"/></svg><b>#ALWAYS#115...</b></span><span>test_Proj</span></li>
      <li><span class="node cap"><svg class="ico"><use href="#chart"/></svg><b>#vsim_capacity#</b></span><span></span></li>
    </ul>
  </section>

  <section class="pane objects">
    <header class="pane-title">
      <svg class="ico"><use href="#shapes"/></svg><h2>ects</h2><i class="dots"></i>
      <button aria-label="Zoom pane"><svg><use href="#plus"/></svg></button><button aria-label="Undock"><svg><use href="#undock"/></svg></button><button aria-label="Close pane"><svg><use href="#close"/></svg></button>
    </header>
    <div class="timebar"><button aria-label="Previous time"><svg><use href="#go-prev"/></svg></button><span class="now"><i></i>708 ps</span><button aria-label="Next time"><svg><use href="#go-next"/></svg></button><svg class="more" viewBox="0 0 7 14"><path d="M0 0l7 7-7 7z"/></svg></div>
    <ul class="signals">
      <li><svg class="gem"><use href="#gem-in"/></svg>clk</li>
      <li class="has"><button class="exp" aria-label="Expand">+</button><i class="link"></i><svg class="gem"><use href="#gem"/></svg>count</li>
      <li><svg class="gem"><use href="#gem-in"/></svg>count_up</li>
      <li><svg class="gem"><use href="#gem-in"/></svg>reset</li>
      <li><svg class="gem"><use href="#gem"/></svg>S0</li>
      <li><svg class="gem"><use href="#gem"/></svg>S1</li>
      <li><svg class="gem"><use href="#gem"/></svg>S2</li>
      <li><svg class="gem"><use href="#gem"/></svg>S3</li>
      <li><svg class="gem"><use href="#gem"/></svg>S4</li>
      <li><svg class="gem"><use href="#gem"/></svg>S5</li>
      <li class="has"><button class="exp" aria-label="Expand">+</button><i class="link"></i><svg class="gem"><use href="#gem"/></svg>state</li>
      <li class="has"><button class="exp" aria-label="Expand">+</button><i class="link"></i><svg class="gem"><use href="#gem-out"/></svg>y</li>
    </ul>
  </section>

  <section class="pane wave">
    <header class="pane-title">
      <svg class="ico"><use href="#wave-ico"/></svg><h2>Wave - Default</h2><i class="rails"></i><i class="dots"></i><i class="rails"></i>
      <button aria-label="Zoom pane"><svg><use href="#plus"/></svg></button><button aria-label="Undock"><svg><use href="#undock"/></svg></button><button aria-label="Close pane"><svg><use href="#close"/></svg></button>
    </header>
    <div class="wave-grid">
      <div class="names">
        <div class="top"><svg class="ico"><use href="#shapes"/></svg><svg class="car"><use href="#caret"/></svg></div>
        <div class="body">
          <ul class="signals">
            <li><svg class="gem"><use href="#gem"/></svg>/test_Project_COE312/clk</li>
            <li><svg class="gem"><use href="#gem"/></svg>/test_Project_COE312/count_up</li>
            <li class="has"><button class="exp" aria-label="Expand">+</button><i class="link"></i><svg class="gem"><use href="#gem"/></svg>/test_Project_COE312/i</li>
            <li><svg class="gem"><use href="#gem"/></svg>/test_Project_COE312/reset</li>
            <li class="has"><button class="exp" aria-label="Expand">+</button><i class="link"></i><svg class="gem"><use href="#gem"/></svg>/test_Project_COE312/y</li>
            <li class="has"><button class="exp" aria-label="Expand">+</button><i class="link"></i><svg class="gem"><use href="#gem"/></svg>/test_Project_COE312/uut/count</li>
            <li class="has"><button class="exp" aria-label="Expand">+</button><i class="link"></i><svg class="gem"><use href="#gem"/></svg>/test_Project_COE312/uut/state</li>
          </ul>
          <div class="endline"><svg viewBox="0 0 6 12"><path d="M1 1v10l4-5z" fill="none" stroke="#000"/></svg></div>
        </div>
      </div>
      <div class="msgs">
        <div class="top">Msgs</div>
        <div class="body">
          <ul class="signals"><li>1</li><li>1</li><li>4</li><li>1</li><li>2</li><li>7</li><li>101</li></ul>
          <div class="endline"></div>
        </div>
      </div>
      <div class="plot">
        <div class="top"><svg id="cursor-head"></svg></div>
        <div class="body"><svg id="plot"></svg></div>
      </div>
      <div class="scroll">
        <div class="top"></div>
        <div class="body"><button aria-label="Scroll up"><svg viewBox="0 0 10 6"><path d="M5 0l5 6H0z"/></svg></button><div class="thumb"></div></div>
      </div>
    </div>
  </section>
</main>
<script src="wave.js"></script>
</body>
</html>
```
FILE: styles.css
```css
*, *::before { box-sizing: border-box; }
html, body { height: 100%; }
body {
  margin: 0;
  display: flex;
  flex-direction: column;
  overflow: hidden;
  background: #f0f0f0;
  color: #000;
  font-family: "Noto Sans", sans-serif;
  font-size: 18px;
}
button { padding: 0; border: 0; background: none; font: inherit; color: inherit; }
h1, h2 { margin: 0; font-weight: normal; white-space: nowrap; }
ul { margin: 0; padding: 0; list-style: none; }
svg { display: block; }
.sprite { position: absolute; width: 0; height: 0; }
.ico { width: 26px; height: 26px; flex: none; }

.titlebar {
  display: flex;
  align-items: center;
  height: 40px;
  flex: none;
  padding-left: 2px;
  gap: 5px;
  background: #fff;
}
.titlebar h1 { font-size: 19px; }
.window-buttons { margin-left: auto; display: flex; padding-right: 3px; }
.window-buttons button { width: 76px; height: 36px; display: grid; place-items: center; }
.window-buttons svg { width: 18px; height: 18px; fill: none; stroke: #000; stroke-width: 1.5; }

.menubar {
  display: flex;
  height: 28px;
  flex: none;
  padding-left: 12px;
  gap: 26px;
  background: #fff;
}
.menubar button { line-height: 28px; }

.toolbars { display: flex; flex-direction: column; flex: none; gap: 1px; border-top: 2px solid #999; border-left: 2px solid #999; margin-top: 3px; }
.row { display: flex; gap: 2px; }
.bar {
  display: flex;
  align-items: center;
  height: 53px;
  padding: 0 5px 3px 0;
  border: 1px solid #fff;
  border-right: 2px solid #666;
  border-bottom: 2px solid #666;
}
.bar::before {
  content: "";
  width: 5px;
  height: 46px;
  margin: 2px 12px 0 2px;
  align-self: flex-start;
  border: 1px solid #fff;
  border-left-width: 3px;
  border-right: 2px solid #666;
  border-bottom-color: #666;
}
.row:nth-child(2) .bar { padding-right: 4px; }
.bar:first-child::before { margin-right: 9px; }
.bar:first-child { padding-right: 7px; }
.t { width: 37px; flex: none; display: grid; place-items: center; }
.b {
  width: 34px;
  height: 32px;
  margin: 0 5px;
  flex: none;
  display: grid;
  place-items: center;
  border: 1px solid #fff;
  border-right: 2px solid #777;
  border-bottom: 2px solid #777;
}
.b.on { background: #fff; border: 1px solid #999; border-right-color: #e4e4e4; border-bottom-color: #e4e4e4; }
.t svg, .b svg { width: 26px; height: 26px; }
.drop { width: 15px; flex: none; display: grid; place-items: center; }
.drop svg { width: 9px; height: 6px; }
.sep { width: 16px; height: 26px; flex: none; background: repeating-linear-gradient(#333 0 1px, transparent 1px 3px) center / 2px 100% no-repeat; }

.combo, .runlen {
  height: 30px;
  padding: 0 3px;
  border: 1px solid #fff;
  border-top: 2px solid #888;
  border-left: 2px solid #888;
  border-radius: 0;
  background: #f0f0f0;
  appearance: none;
  opacity: 1;
  color: #000;
  font: 19px "Liberation Mono", monospace;
}
.bar.combo-bar, .row:nth-child(2) .combo-bar { padding-right: 14px; }
.bar label { font-size: 17px; }
.combo-bar label { margin: 0 9px 0 10px; }
.off label, .off .combo { color: #777; }
.layout { width: 204px; }
.columns { width: 355px; }
.search { width: 192px; }
.search-bar label { margin: 0 11px; }
.search-bar .arrow { margin-right: 5px; }
.arrow {
  width: 28px;
  height: 28px;
  margin-left: 4px;
  display: grid;
  place-items: center;
  border: 1px solid #fff;
  border-right: 2px solid #777;
  border-bottom: 2px solid #777;
}
.arrow svg { width: 22px; height: 12px; }
.runlen { width: 98px; margin-left: 7px; padding-left: 24px; background: #fff; }
.spin { display: flex; flex-direction: column; width: 21px; margin: 0 9px 0 4px; }
.spin button { height: 15px; display: grid; place-items: center; border: 1px solid #fff; border-right-color: #777; border-bottom-color: #777; }
.spin svg { width: 10px; height: 8px; }

.workspace { flex: 1; min-height: 0; display: flex; gap: 11px; margin-top: 1px; background: #c8c8c8; }
.pane {
  display: flex;
  flex-direction: column;
  min-width: 0;
  border: 2px solid #999;
  border-bottom: 0;
  padding: 1px 2px 0;
  background: #f0f0f0;
}
.sim { width: 332px; flex: none; }
.objects { width: 194px; flex: none; }
.wave { flex: 1; margin-right: 1px; }
.pane-title { display: flex; align-items: center; height: 32px; flex: none; gap: 6px; padding-right: 1px; }
.pane-title button {
  width: 20px;
  height: 21px;
  flex: none;
  display: grid;
  place-items: center;
  background: #f0f0f0;
  border: 1px solid #fff;
  border-right: 2px solid #666;
  border-bottom: 2px solid #666;
}
.pane-title button svg { width: 18px; height: 18px; }
.pane-title h2 { font-size: 18px; line-height: 24px; }
.rails { flex: 1; height: 11px; border: solid #888; border-width: 1px 0; box-shadow: inset 0 1px #fff, 0 1px #fff; }
.dots { width: 30px; height: 11px; flex: none; background: radial-gradient(circle at 1px 1px, #666 1px, transparent 1px) 0 0 / 4px 5px; }
.sim .rails + .dots { margin-left: -2px; }
.sim .pane-title { padding-right: 4px; }
.wave .pane-title { background: #99b4d1; padding-left: 1px; }
.wave .pane-title button { margin-left: 1px; }
.wave .rails { height: 13px; border: 0; background: linear-gradient(#cdefff 0 2px, #234 2px 4px, transparent 4px 8px, #cdefff 8px 10px, #000 10px 12px, transparent 12px); box-shadow: none; }
.wave .dots { width: 33px; background: radial-gradient(circle at 1px 1px, #fff 1px, transparent 1px) 0 0 / 5px 4px, radial-gradient(circle at 1px 1px, #223 1px, transparent 1px) 1px 1px / 5px 4px; }

.sim-head { display: grid; grid-template-columns: 20px 225px 1fr; height: 28px; flex: none; border-top: 1px solid #888; border-bottom: 2px solid #666; line-height: 25px; white-space: nowrap; overflow: hidden; }
.sim-head span { padding-left: 2px; border-right: 1px solid #777; box-shadow: 1px 0 #fff; }
.sim-head span:last-child { border: 0; font-size: 17px; }
.sort { display: grid; place-items: center; }
.sort svg { width: 14px; height: 12px; }
.tree { flex: 1; background: #fff; padding-top: 4px; }
.tree li { display: grid; grid-template-columns: 245px 1fr; height: 27px; align-items: center; white-space: nowrap; }
.tree li > span { padding-left: 3px; font-size: 17px; }
.tree .node { display: flex; align-items: center; padding-left: 9px; height: 27px; font-size: 18px; }
.tree .in { padding-left: 38px; }
.tree .cap { padding-left: 33px; }
.tree b { font-weight: normal; margin-left: 10px; }
.tree .sel { background: #bfcbd9; }
.cube { width: 20px; height: 20px; flex: none; }
.elbow { width: 18px; height: 27px; margin: -24px 2px 0 9px; border: solid #999; border-width: 0 0 1px 1px; flex: none; }
.exp {
  width: 17px;
  height: 17px;
  flex: none;
  border: 1px solid #fff;
  border-right-color: #aab;
  border-bottom-color: #aab;
  background: linear-gradient(135deg, #fff 40%, #b8bfd8);
  color: #000;
  font: bold 15px/14px "DejaVu Sans", sans-serif;
}
.tree .exp { border-color: #8b8fa8; }
.link { width: 9px; height: 1px; flex: none; background: #aaa; }
.tree .link { width: 12px; }
.tree .in .link { width: 7px; margin-right: 2px; }

.timebar { display: flex; align-items: center; height: 28px; flex: none; border-top: 1px solid #888; border-bottom: 2px solid #666; padding-left: 2px; }
.timebar button, .now { height: 24px; border: 1px solid #999; background: #e3efe0; display: flex; align-items: center; justify-content: center; }
.timebar button { width: 28px; flex: none; }
.timebar button svg { width: 26px; height: 20px; }
.now { width: 106px; gap: 7px; font: 19px "Liberation Mono", monospace; white-space: nowrap; }
.now i { width: 13px; height: 13px; border-radius: 50%; background: #0c0; border: 1px solid #060; }
.more { width: 7px; height: 14px; margin-left: 7px; }
.signals li { display: flex; align-items: center; white-space: nowrap; color: #fff; }
.gem { width: 25px; height: 25px; flex: none; margin-right: 9px; }
.objects .signals { flex: 1; background: #505a8c; padding-top: 3px; overflow: hidden; }
.objects .signals li { height: 27px; padding-left: 34px; }
.objects .signals .has { padding-left: 8px; }

.wave { padding-right: 4px; }
.wave-grid { flex: 1; min-height: 0; display: grid; grid-template-columns: 393px 167px 1fr 29px; gap: 5px; background: #f4f4f4; margin-top: 1px; }
.wave-grid > div { display: flex; flex-direction: column; gap: 3px; min-width: 0; border-top: 1px solid #777; }
.wave-grid .top { height: 32px; flex: none; background: #808080; }
.wave-grid .body { flex: 1; background: #808080; min-height: 0; }
.names .top { display: flex; align-items: center; padding-left: 18px; gap: 7px; }
.car { width: 9px; height: 6px; margin-top: 4px; }
.names .body { margin-left: 14px; }
.wave .signals { display: grid; grid-template-rows: repeat(7, 1fr); height: 199px; margin-top: 2px; }
.names .signals li { padding-left: 33px; }
.names .signals .has { padding-left: 8px; }
.names .link { width: 8px; background: #ccc; }
.msgs .signals li { padding-left: 3px; }
.endline { height: 12px; margin: -6px 7px 0 2px; background: linear-gradient(#000, #000) center / 100% 1px no-repeat; }
.msgs .endline { margin-left: 3px; }
.endline svg { width: 6px; height: 12px; background: #808080; }
.wave-grid .msgs .top { text-align: right; line-height: 32px; padding-right: 9px; color: #fff; }
.wave-grid .plot .top, .wave-grid .plot .body { background: #000; overflow: hidden; }
.plot svg { width: 100%; height: 100%; }
.plot text { fill: #fff; font-size: 18px; }
.wave-grid .scroll .body { background: #f0f0f0; display: flex; flex-direction: column; gap: 3px; padding-left: 2px; border-top: 1px solid #777; border-right: 2px solid #999; }
.scroll button { height: 24px; display: grid; place-items: center; border: 1px solid #fff; border-right: 2px solid #777; border-bottom: 2px solid #777; }
.scroll button svg { width: 10px; height: 6px; }
.thumb { flex: 1; border: 2px solid #fff; border-right: 2px solid #777; border-bottom: 0; }
```
FILE: wave.js
```
const NS = "http://www.w3.org/2000/svg";
const plot = document.getElementById("plot");
const PITCH = 28.4, HIGH = 7.3, START = 5, END = 1315;
const CLOCK = 14.57, GRID = 72.87, CURSOR = 1033;
const GREEN = "#00f000", BUS = "#a4f0a4", RED = "#f00000";

function add(parent, name, attrs, text) {
  const el = document.createElementNS(NS, name);
  for (const k in attrs) el.setAttribute(k, attrs[k]);
  if (text) el.textContent = text;
  parent.appendChild(el);
}
function line(d, stroke) {
  add(plot, "path", { d, stroke, fill: "none", "stroke-width": 2 });
}
const rowTop = r => Math.round(HIGH + r * PITCH);

for (let x = 77.3; x < 1320; x += GRID) {
  add(plot, "rect", { x: Math.round(x) - 1, y: 0, width: 2, height: 2000, fill: "#808080" });
}
let clk = `M${START} ${rowTop(0) + 11}V${rowTop(0) + 20}`;
for (let x = 12.7; x < END; x += CLOCK) {
  const a = Math.round(x), b = Math.min(Math.round(x + CLOCK / 2), END);
  clk += `H${a}V${rowTop(0)}H${b}V${rowTop(0) + 20}`;
}
line(clk, GREEN);

function level(r, rise) {
  const y = rowTop(r);
  line(`M${START} ${y + 11}V${y + 20}H${rise}V${y}H${END}`, GREEN);
}
level(1, 311);
level(3, 296);

function bus(r, points) {
  const y0 = rowTop(r), y1 = y0 + 20, mid = (y0 + y1) / 2;
  line(`M${START - 1} ${mid}H${points[0][0]}`, RED);
  points.forEach(([x, label], n) => {
    const last = n === points.length - 1;
    const e = last ? END : points[n + 1][0];
    const l = x + 2, rt = last ? e : e - 2;
    line(`M${rt} ${y0}H${l}V${y0 + 4}H${x}V${y1 - 4}H${l}V${y1}H${rt}`, BUS);
    if (!last) line(`M${rt} ${y0}V${y0 + 4}H${e}M${rt} ${y1}V${y1 - 4}H${e}`, BUS);
    if (label) add(plot, "text", { x: x + 7, y: y0 + 17 }, label);
  });
}
const ticks = (from, to) => {
  const out = [];
  for (let x = from; x < to; x += CLOCK) out.push([Math.round(x)]);
  return out;
};
bus(2, [...ticks(325.3, 1120), [1126, "11"]]);
bus(4, [[304, "c"], [332, "0"], [464, "e"], [624, "3"], [784, "1"], [944, "2"], [1104, "c"], [1134, "0"], [1266, "e"]]);
bus(5, [[12, "0"], ...ticks(303, END - 3)]);
bus(6, [[12, "000"], [317, "001"], [449, "010"], [609, "011"], [769, "100"], [929, "101"], [1090, ""], [1119, "001"], [1250, "010"]]);

add(plot, "rect", { x: CURSOR, y: 1, width: 5, height: 2000, fill: "#ffd700" });
add(document.getElementById("cursor-head"), "rect", { x: CURSOR, y: 2, width: 5, height: 40, fill: "#ffd700" });
for (const r of [0, 1, 3]) {
  add(plot, "rect", { x: CURSOR, y: rowTop(r) - 1, width: 5, height: 1, fill: RED });
}
for (const r of [2, 4, 5, 6]) {
  for (const y of [rowTop(r), rowTop(r) + 20]) {
    add(plot, "rect", { x: CURSOR, y: y - 1, width: 5, height: 1, fill: "#2020a0" });
  }
}
```
